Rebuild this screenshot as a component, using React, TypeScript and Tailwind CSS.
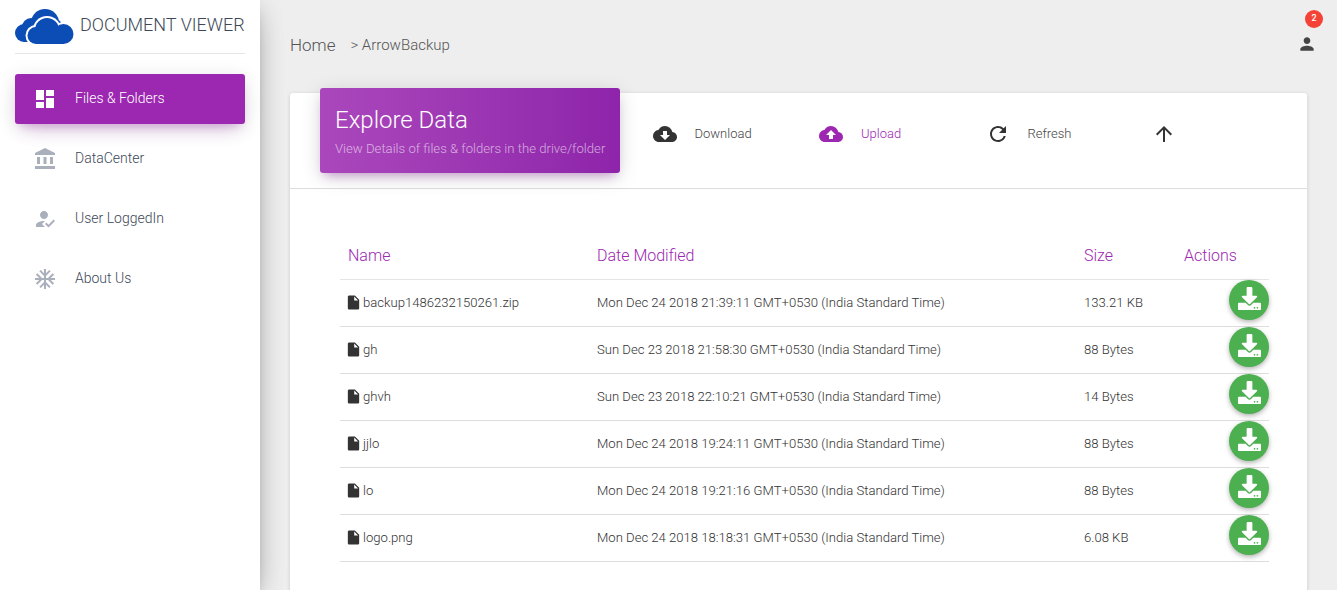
import React from "react";
import { FaDownload } from "react-icons/fa";
import {
  MdAccountBalance,
  MdAcUnit,
  MdArrowUpward,
  MdCloudDownload,
  MdCloudUpload,
  MdDashboard,
  MdHowToReg,
  MdInsertDriveFile,
  MdPerson,
  MdRefresh,
} from "react-icons/md";

const files = [
  { name: "backup1486232150261.zip", date: "Mon Dec 24 2018 21:39:11 GMT+0530 (India Standard Time)", size: "133.21 KB" },
  { name: "gh", date: "Sun Dec 23 2018 21:58:30 GMT+0530 (India Standard Time)", size: "88 Bytes" },
  { name: "ghvh", date: "Sun Dec 23 2018 22:10:21 GMT+0530 (India Standard Time)", size: "14 Bytes" },
  { name: "jjlo", date: "Mon Dec 24 2018 19:24:11 GMT+0530 (India Standard Time)", size: "88 Bytes" },
  { name: "lo", date: "Mon Dec 24 2018 19:21:16 GMT+0530 (India Standard Time)", size: "88 Bytes" },
  { name: "logo.png", date: "Mon Dec 24 2018 18:18:31 GMT+0530 (India Standard Time)", size: "6.08 KB" },
];

function Logo() {
  return (
    <svg width="60" height="36" viewBox="0 0 60 36" className="shrink-0">
      {/* back cloud */}
      <g fill="#0b4db5">
        <circle cx="30" cy="14" r="14" />
        <circle cx="40" cy="17" r="7" />
        <circle cx="16" cy="18" r="9" />
        <circle cx="9" cy="24" r="9" />
        <rect x="9" y="20" width="30" height="13" />
      </g>
      {/* white ring round the front cloud */}
      <g fill="#fff">
        <circle cx="32" cy="21" r="14" />
        <circle cx="48.5" cy="25" r="12" />
        <circle cx="21" cy="26.5" r="10.5" />
      </g>
      <g fill="#0b4db5">
        <circle cx="32" cy="21" r="12" />
        <circle cx="48.5" cy="25" r="10" />
        <circle cx="21" cy="26.5" r="8.5" />
        <rect x="21" y="24" width="28" height="11" />
      </g>
    </svg>
  );
}

function NavItem({ icon, label, active }: { icon: React.ReactNode; label: string; active?: boolean }) {
  return (
    <div
      className={
        active
          ? "flex h-[50px] items-center rounded-[3px] bg-[#9c27b0] pl-[18px] text-white shadow-[0_12px_20px_-10px_rgba(156,39,176,0.28),0_4px_20px_0_rgba(0,0,0,0.12),0_7px_8px_-5px_rgba(156,39,176,0.2)]"
          : "flex h-[50px] items-center rounded-[3px] pl-[18px] text-[#3c4858]"
      }
    >
      <span className={active ? "mr-[18px] text-white" : "mr-[18px] text-[#a9afbb]"}>{icon}</span>
      <span className="pb-[2px] text-[14px] font-light">{label}</span>
    </div>
  );
}

function ToolItem({ icon, label, accent }: { icon: React.ReactNode; label?: string; accent?: boolean }) {
  return (
    <div className={accent ? "flex w-[166.5px] items-center text-[#9c27b0]" : "flex w-[166.5px] items-center text-[#333]"}>
      <span className="mr-[18px]">{icon}</span>
      {label && <span className={accent ? "text-[13px] font-light" : "text-[13px] font-light text-[#444]"}>{label}</span>}
    </div>
  );
}

export default function App() {
  return (
    <div className="flex h-[590px] overflow-hidden bg-[#eeeeee] font-['Roboto',sans-serif]">
      <aside className="z-10 w-[260px] shrink-0 bg-white px-[15px] shadow-[0_10px_30px_-12px_rgba(0,0,0,0.42),0_4px_25px_0_rgba(0,0,0,0.12),0_8px_10px_-5px_rgba(0,0,0,0.2)]">
        <div className="flex h-[54px] items-start border-b border-[#e5e5e5] pt-[9px]">
          <Logo />
          <span className="ml-[5px] mt-[4px] whitespace-nowrap text-[18px] leading-[24px] font-light text-[#3c4858]">
            DOCUMENT VIEWER
          </span>
        </div>
        <nav className="mt-5 flex flex-col gap-[10px]">
          <NavItem active icon={<MdDashboard size={24} />} label="Files & Folders" />
          <NavItem icon={<MdAccountBalance size={24} />} label="DataCenter" />
          <NavItem icon={<MdHowToReg size={24} />} label="User LoggedIn" />
          <NavItem icon={<MdAcUnit size={24} />} label="About Us" />
        </nav>
      </aside>

      <main className="min-w-0 flex-1 pl-[30px] pr-[30px]">
        <header className="flex h-[93px] items-start justify-between">
          <div className="mt-[35px] flex items-center text-[#555]">
            <span className="text-[17px] leading-[20px] font-light">Home</span>
            <span className="ml-[15px] text-[15px] leading-[20px] font-light">&gt; ArrowBackup</span>
          </div>
          <div className="relative mr-[-10px] mt-[34px] h-5 w-5 shrink-0 text-[#444]">
            <MdPerson size={20} className="block" />
            <span className="absolute left-[8px] top-[-24px] flex h-[18px] w-[18px] items-center justify-center rounded-full bg-[#f44336] text-[9px] font-medium text-white">
              2
            </span>
          </div>
        </header>

        <section className="h-[600px] rounded-[3px] bg-white shadow-[0_1px_4px_0_rgba(0,0,0,0.14)]">
          <div className="flex h-[96px] items-start border-b border-[#ddd] pl-[30px]">
            <div className="relative mt-[-5px] h-[85px] w-[300px] shrink-0 rounded-[3px] bg-gradient-to-r from-[#ab47bc] to-[#8e24aa] pl-[15px] pt-[16px] shadow-[0_4px_20px_0_rgba(0,0,0,0.14),0_7px_10px_-5px_rgba(156,39,176,0.4)]">
              <h1 className="text-[24px] leading-[32px] font-light text-white">Explore Data</h1>
              <p className="mt-[4px] whitespace-nowrap text-[13.15px] leading-[18px] font-light text-white/60">
                View Details of files &amp; folders in the drive/folder
              </p>
            </div>
            <div className="ml-[32.5px] mt-[29px] flex h-6 items-center">
              <ToolItem icon={<MdCloudDownload size={24} className="block" />} label="Download" />
              <ToolItem accent icon={<MdCloudUpload size={24} className="block" />} label="Upload" />
              <ToolItem icon={<MdRefresh size={24} className="block" />} label="Refresh" />
              <ToolItem icon={<MdArrowUpward size={24} className="block" />} />
            </div>
          </div>

          <div className="pl-[50px] pr-[38px] pt-[43px]">
            <table className="w-full table-fixed border-collapse text-left">
              <thead>
                <tr className="h-[47px] border-b border-[#e5e5e5] text-[16px] font-light text-[#9c27b0]">
                  <th className="w-[249px] pl-2 pt-[2px] font-light">Name</th>
                  <th className="w-[487px] pl-2 pt-[2px] font-light">Date Modified</th>
                  <th className="w-[100px] pl-2 pt-[2px] font-light">Size</th>
                  <th className="pl-2 pt-[2px] font-light">Actions</th>
                </tr>
              </thead>
              <tbody>
                {files.map((file) => (
                  <tr key={file.name} className="h-[47px] border-b border-[#ddd] text-[13.1px] font-light text-[#333]">
                    <td className="pl-2">
                      <span className="flex items-center">
                        <MdInsertDriveFile size={17} className="-ml-[3px] shrink-0 text-[#333]" />
                        <span className="ml-[1px]">{file.name}</span>
                      </span>
                    </td>
                    <td className="pl-2 whitespace-nowrap">{file.date}</td>
                    <td className="pl-2">{file.size}</td>
                    <td className="p-0 align-top">
                      <div className="flex justify-end">
                        <button className="flex h-10 w-10 items-center justify-center rounded-full bg-[#4caf50] text-white shadow-[0_2px_5px_0_rgba(0,0,0,0.3)]">
                          <FaDownload size={23} className="-mt-[2px]" />
                        </button>
                      </div>
                    </td>
                  </tr>
                ))}
              </tbody>
            </table>
          </div>
        </section>
      </main>
    </div>
  );
}
